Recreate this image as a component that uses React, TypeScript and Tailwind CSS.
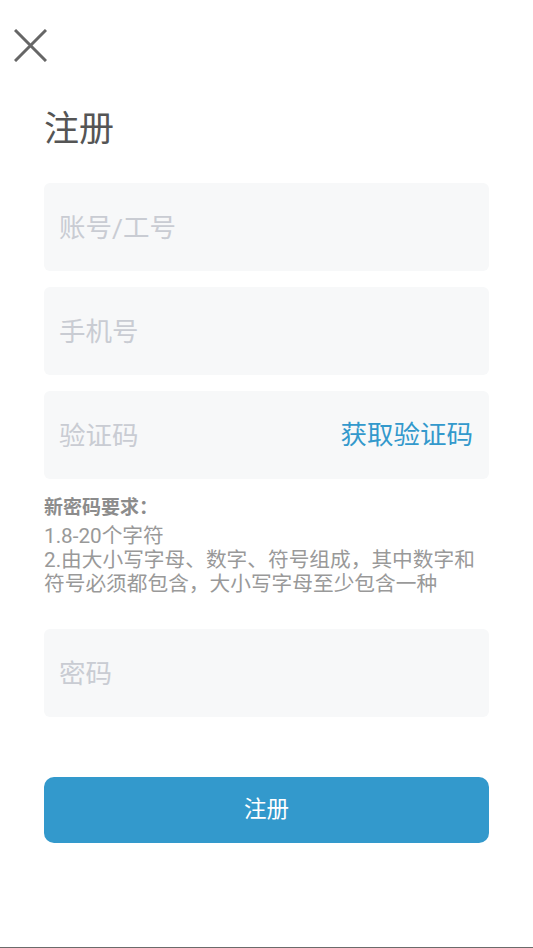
const fields = ["账号/工号", "手机号"];

const CloseIcon = () => (
    <svg width="33" height="33" viewBox="0 0 33 33" className="block">
        <path
            d="M1 1 L32 32 M32 1 L1 32"
            stroke="#666666"
            strokeWidth="3"
            strokeLinecap="butt"
        />
    </svg>
);

const inputClass =
    "w-full h-full bg-transparent outline-none text-[26.5px] text-[#555] placeholder:text-[#c9ccd3]";

const App = () => {
    return (
        <div
            className="min-h-[948px] bg-white flex flex-col border-b border-[#6b6b6b]"
            style={{ fontFamily: '"Roboto", "Noto Sans CJK SC", sans-serif' }}
        >
            <div className="pl-[14px] pt-[29px]">
                <CloseIcon />
            </div>

            <div className="px-[44px] flex flex-col">
                <h1 className="h-[60px] mt-[38px] flex items-center text-[35px] text-[#555] font-normal">
                    注册
                </h1>

                <div className="mt-[23px] flex flex-col gap-[16px]">
                    {fields.map((label) => (
                        <div
                            key={label}
                            className="h-[88px] rounded-[6px] bg-[#f7f8f9] px-[15px] flex items-center"
                        >
                            <input className={inputClass} placeholder={label} />
                        </div>
                    ))}
                    <div className="h-[88px] rounded-[6px] bg-[#f7f8f9] pl-[15px] pr-[16px] flex items-center gap-3">
                        <input className={inputClass + " flex-1 min-w-0"} placeholder="验证码" />
                        <button className="shrink-0 text-[26.5px] text-[#3399cc] leading-none">
                            获取验证码
                        </button>
                    </div>
                </div>

                <div className="mt-[17px] text-[20.7px] leading-[24px] text-[#999]">
                    <p className="font-bold text-[#8c8c8c] text-[19px] mb-[4px]">新密码要求：</p>
                    <p>1.8-20个字符</p>
                    <p>2.由大小写字母、数字、符号组成，其中数字和符号必须都包含，大小写字母至少包含一种</p>
                </div>

                <div className="mt-[33px] h-[88px] rounded-[6px] bg-[#f7f8f9] px-[15px] flex items-center">
                    <input type="password" className={inputClass} placeholder="密码" />
                </div>

                <button className="mt-[60px] h-[66px] rounded-[10px] bg-[#3399cc] text-white text-[22.5px]">
                    注册
                </button>
            </div>
        </div>
    );
};

export default App;
